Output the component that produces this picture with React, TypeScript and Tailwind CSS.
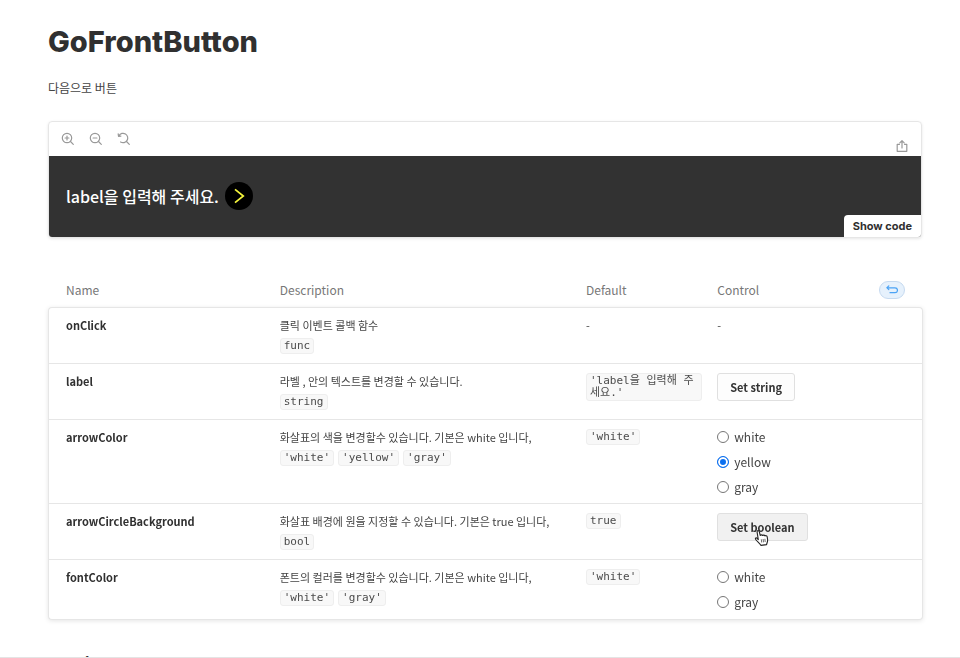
import React, { useState } from "react";

type Arg = {
  name: string;
  description: string;
  types: string[];
  fallback?: string;
  control: "none" | "button" | "radio";
  action?: string;
  options?: string[];
  selected?: string;
  hovered?: boolean;
};

const args: Arg[] = [
  { name: "onClick", description: "클릭 이벤트 콜백 함수", types: ["func"], control: "none" },
  {
    name: "label",
    description: "라벨 , 안의 텍스트를 변경할 수 있습니다.",
    types: ["string"],
    fallback: "'label을 입력해 주세요.'",
    control: "button",
    action: "Set string",
  },
  {
    name: "arrowColor",
    description: "화살표의 색을 변경할수 있습니다. 기본은 white 입니다,",
    types: ["'white'", "'yellow'", "'gray'"],
    fallback: "'white'",
    control: "radio",
    options: ["white", "yellow", "gray"],
    selected: "yellow",
  },
  {
    name: "arrowCircleBackground",
    description: "화살표 배경에 원을 지정할 수 있습니다. 기본은 true 입니다,",
    types: ["bool"],
    fallback: "true",
    control: "button",
    action: "Set boolean",
    hovered: true,
  },
  {
    name: "fontColor",
    description: "폰트의 컬러를 변경할수 있습니다. 기본은 white 입니다,",
    types: ["'white'", "'gray'"],
    fallback: "'white'",
    control: "radio",
    options: ["white", "gray"],
  },
];

function Code({ children }: { children: React.ReactNode }) {
  return (
    <code className="rounded-[3px] border border-[#eeeeee] bg-[#f8f8f8] px-[3px] py-px font-['DejaVu_Sans_Mono','Noto_Sans_CJK_KR',monospace] text-[11px] leading-3 text-[#4b4b4b]">
      {children}
    </code>
  );
}

function ToolIcon({ label, children }: { label: string; children: React.ReactNode }) {
  return (
    <button type="button" aria-label={label} className="text-[#999999]">
      <svg viewBox="0 0 14 14" className="size-3.5" fill="none" stroke="currentColor" strokeWidth="1.2" strokeLinecap="round" strokeLinejoin="round">
        {children}
      </svg>
    </button>
  );
}

function HandCursor() {
  return (
    <svg viewBox="0 0 16 18" className="absolute top-[15px] left-9 h-[18px] w-4" aria-hidden="true">
      <path
        d="M4.3 10.6 3.1 3.2C2.8 1.3 4.9 1 5.3 2.7L6.2 6.4C6.6 5.6 8.1 5.7 8.5 6.5 9.2 5.8 10.5 6 10.9 6.9 11.7 6.3 13 6.7 13.2 7.8L13.6 10.5C13.8 12.6 13 13.6 12.6 15.6L6.9 16.4C6.3 14.6 3.6 13 1.7 10.5 .8 9.2 2.2 8.3 3.2 9.3Z"
        fill="#fff"
        stroke="#222"
        strokeWidth="1.1"
        strokeLinejoin="round"
      />
      <path d="m7.3 10.3.4 3.2m1.4-3.5.4 3.3m1.4-3.5.3 3.2" fill="none" stroke="#444" strokeWidth=".8" />
    </svg>
  );
}

function Control({ arg }: { arg: Arg }) {
  const [value, setValue] = useState(arg.selected);
  if (arg.control === "button") {
    return (
      <button
        type="button"
        className={`relative block h-7 rounded-[3px] border border-[#e0e0e0] px-3 font-bold text-[#333333] ${arg.hovered ? "bg-[#f1f1f1]" : "bg-[#fdfdfd]"}`}
      >
        {arg.action}
        {arg.hovered && <HandCursor />}
      </button>
    );
  }
  if (arg.control === "radio") {
    return (
      <div role="radiogroup" aria-label={arg.name} className="flex flex-col gap-[9px]">
        {arg.options?.map((option) => (
          <label key={option} className="flex items-center gap-[5px] text-xs leading-4">
            <input
              type="radio"
              name={arg.name}
              checked={value === option}
              onChange={() => setValue(option)}
              className="size-3 appearance-none rounded-full border border-[#767676] bg-white checked:border-[#0b6fef] checked:bg-[#0b6fef] checked:shadow-[inset_0_0_0_2px_white]"
            />
            {option}
          </label>
        ))}
      </div>
    );
  }
  return <>-</>;
}

export default function App() {
  return (
    <div className="flex h-screen flex-col bg-white font-['Noto_Sans_CJK_KR',sans-serif] text-xs text-[#444444]">
      <main className="min-h-0 flex-1 overflow-hidden pr-[37px] pl-12">
        <h1 className="mt-6 font-['Inter',sans-serif] text-[29px] leading-9 font-extrabold text-[#303030]">GoFrontButton</h1>
        <p className="mt-[18px] leading-5">다음으로 버튼</p>

        <section className="mt-[23px] mr-px overflow-hidden rounded border border-[#e6e6e6] shadow-[0_1px_3px_rgba(0,0,0,0.1)]">
          <div className="flex h-[34px] items-center justify-between px-3">
            <div className="flex gap-3.5">
              <ToolIcon label="Zoom in">
                <circle cx="6" cy="6" r="4.7" />
                <path d="m9.5 9.5 2.8 2.8M6 4.1v3.8M4.1 6h3.8" />
              </ToolIcon>
              <ToolIcon label="Zoom out">
                <circle cx="6" cy="6" r="4.7" />
                <path d="m9.5 9.5 2.8 2.8M4.1 6h3.8" />
              </ToolIcon>
              <ToolIcon label="Reset zoom">
                <path d="M2 3.6A4.7 4.7 0 1 1 3.6 10M9.5 9.5l2.8 2.8M1.2 1.9l.3 2.4 2.4-.2" />
              </ToolIcon>
            </div>
            <div className="flex pt-3.5">
              <ToolIcon label="Share">
                <path d="M4.5 5.3H2.2v7h9.6v-7H9.5M7 9V1.8M4.8 3.8 7 1.6l2.2 2.2" />
              </ToolIcon>
            </div>
          </div>
          <div className="flex h-[81px] items-stretch justify-between bg-[#323232]">
            <button type="button" className="flex items-center gap-1.5 pb-px pl-[17px] text-base font-medium text-white">
              label을 입력해 주세요.
              <span className="flex size-7 items-center justify-center rounded-full bg-black">
                <svg viewBox="0 0 28 28" className="size-7" fill="none" stroke="#f5f53c" strokeWidth="1.7">
                  <path d="m10 7.3 8.3 6.7-8.3 6.7" />
                </svg>
              </span>
            </button>
            <button type="button" className="h-[22px] self-end rounded-tl bg-white px-[9px] font-['Inter',sans-serif] text-[11px] font-bold text-[#303030]">
              Show code
            </button>
          </div>
        </section>

        <table className="mt-10 w-full table-fixed border-separate border-spacing-0 text-left text-[11px] leading-4">
          <thead>
            <tr className="h-[29px] text-xs text-[#777777]">
              <th className="w-1/4 pb-1.5 pl-[18px] font-normal">Name</th>
              <th className="w-[35%] pb-1.5 pl-[13px] font-normal">Description</th>
              <th className="w-[15%] pb-1.5 pl-[13px] font-normal">Default</th>
              <th className="w-1/4 pr-[18px] pb-1.5 pl-[13px] font-normal">
                <div className="flex items-center justify-between">
                  Control
                  <button type="button" aria-label="Reset controls" className="flex h-[18px] w-[26px] items-center justify-center rounded-full border border-[#c6daf0] bg-[#e6f1fc] text-[#4ba3f5]">
                    <svg viewBox="0 0 12 10" className="h-2.5 w-3" fill="none" stroke="currentColor" strokeWidth="1.2" strokeLinecap="round">
                      <path d="M1 2.8h8a2.4 2.4 0 0 1 0 4.9H4M2.8.9.9 2.8l1.9 1.9" />
                    </svg>
                  </button>
                </div>
              </th>
            </tr>
          </thead>
          <tbody className="drop-shadow-[0_1px_2px_rgba(0,0,0,0.1)] [&_td]:border-t [&_td]:border-[#e6e6e6] [&_td]:bg-white [&_td]:pt-[9px] [&_td]:pb-2 [&_td]:align-top [&_td:first-child]:border-l [&_td:last-child]:border-r [&_tr:first-child>td:first-child]:rounded-tl [&_tr:first-child>td:last-child]:rounded-tr [&_tr:last-child>td]:border-b [&_tr:last-child>td]:pb-[9px] [&_tr:last-child>td:first-child]:rounded-bl [&_tr:last-child>td:last-child]:rounded-br">
            {args.map((arg) => (
              <tr key={arg.name} className="h-14">
                <td className="pl-[17px] font-bold text-[#303030]">{arg.name}</td>
                <td className="pl-[13px]">
                  <div className="whitespace-nowrap">{arg.description}</div>
                  <div className="mt-[5px] flex gap-1">
                    {arg.types.map((type) => (
                      <Code key={type}>{type}</Code>
                    ))}
                  </div>
                </td>
                <td className="pr-0.5 pl-[13px]">{arg.fallback ? <div className="flex"><Code>{arg.fallback}</Code></div> : "-"}</td>
                <td className="pl-[13px]">
                  <Control arg={arg} />
                </td>
              </tr>
            ))}
          </tbody>
        </table>

        <h2 className="mt-[30px] font-['Inter',sans-serif] text-lg leading-7 font-bold text-[#303030]">Stories</h2>
      </main>
      <div className="h-px shrink-0 bg-[#e4e4e4]" />
    </div>
  );
}
